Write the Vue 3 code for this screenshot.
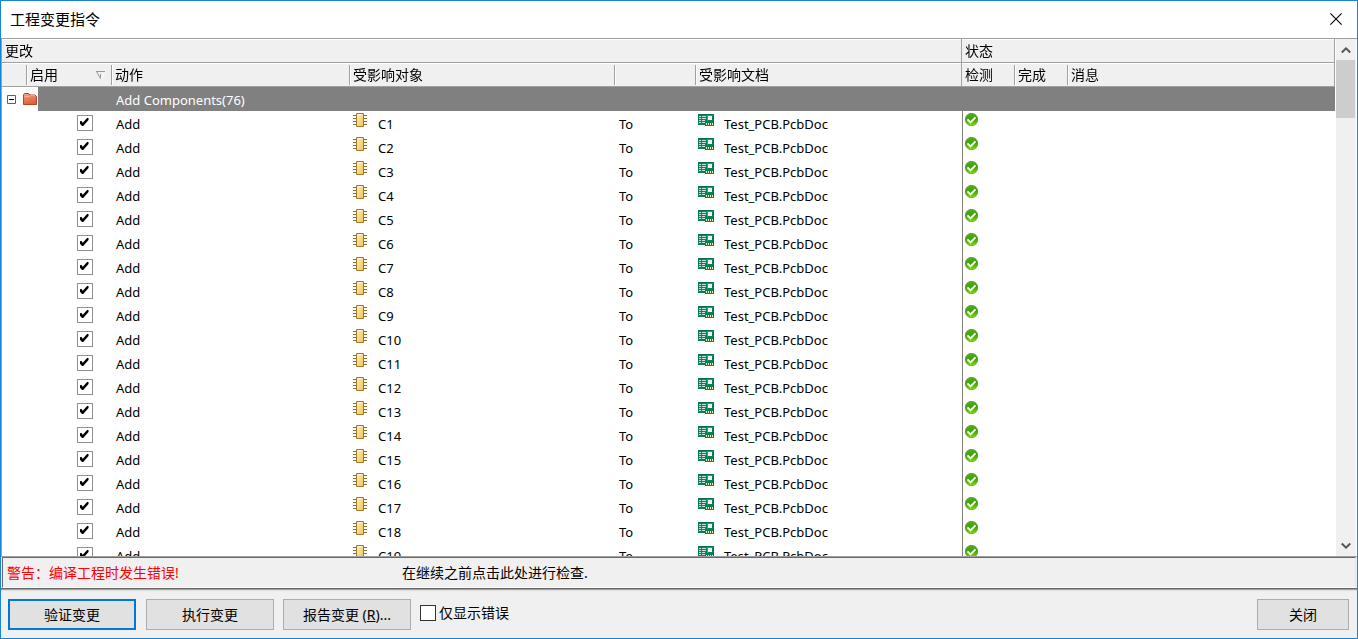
<script setup>
import { reactive, ref } from 'vue'

const rows = reactive(
  Array.from({ length: 19 }, (_, i) => ({ name: `C${i + 1}`, enabled: true }))
)
const onlyErrors = ref(false)
const list = ref(null)
const scroll = (dy) => list.value.scrollBy(0, dy)
const pins = [2, 5, 8, 11]
</script>

<template>
  <main class="window">
    <header class="title-bar">
      <h1>工程变更指令</h1>
      <button class="close" aria-label="关闭窗口">
        <svg width="12" height="12" viewBox="0 0 12 12"><path d="M.4.4l11.2 11.2M11.6.4L.4 11.6" stroke="#000" stroke-width="1.1" /></svg>
      </button>
    </header>

    <section class="grid-area">
      <div ref="list" class="list">
        <table>
          <colgroup>
            <col class="c-tree" /><col class="c-enable" /><col class="c-action" />
            <col class="c-object" /><col class="c-to" /><col class="c-doc" />
            <col class="c-check" /><col class="c-done" /><col />
          </colgroup>
          <thead>
            <tr class="bands">
              <th colspan="6" class="edge">更改</th>
              <th colspan="3" class="edge">状态</th>
            </tr>
            <tr class="heads">
              <th></th>
              <th class="sep">
                <div class="sort">启用
                  <svg width="9" height="8" viewBox="0 0 9 8" fill="none"><path d="M0 .5h9M.5 .5l4 7V3" stroke="#999" /><path d="M5.500 7.500l3-6" stroke="#fff" /></svg>
                </div>
              </th>
              <th class="sep">动作</th>
              <th class="sep">受影响对象</th>
              <th class="sep"></th>
              <th class="sep edge">受影响文档</th>
              <th>检测</th>
              <th class="sep">完成</th>
              <th class="sep edge">消息</th>
            </tr>
          </thead>
          <tbody>
            <tr class="group">
              <td colspan="2">
                <div class="tree">
                  <button class="toggle" aria-label="折叠"><svg width="9" height="9" viewBox="0 0 9 9"><path d="M.5.5h8v8h-8z" fill="#fff" stroke="#606060" /><path d="M2 4.500h5" stroke="#000" /></svg></button>
                  <svg width="14" height="12" viewBox="0 0 14 12">
                    <defs><linearGradient id="folder" x2="0.3" y2="1"><stop stop-color="#f6a184" /><stop offset="1" stop-color="#dc603c" /></linearGradient></defs>
                    <path d="M.5 11.500v-10l1-1h4l1.500 1.500h5l1 1 .5.500v8z" fill="url(#folder)" stroke="#b94324" />
                    <path d="M1.500 3.500h5l1-1h4.500" fill="none" stroke="#ffc0a4" stroke-width=".7" />
                  </svg>
                </div>
              </td>
              <td colspan="7">Add Components(76)</td>
            </tr>
            <tr v-for="row in rows" :key="row.name">
              <td></td>
              <td class="tick"><input v-model="row.enabled" type="checkbox" class="box" :aria-label="'启用 ' + row.name" /></td>
              <td>Add</td>
              <td class="object">
                <div class="item">
                  <svg width="14" height="14" viewBox="0 0 14 14">
                    <defs><linearGradient id="chip" x2="1" y2="1"><stop stop-color="#fff2ba" /><stop offset="1" stop-color="#f1bf55" /></linearGradient></defs>
                    <path v-for="y in pins" :key="y" :d="`M0 ${y + .5}h14`" stroke="#8a7433" />
                    <path d="M3.500.5h7v13h-7z" fill="url(#chip)" stroke="#9a7a2c" />
                    <path d="M4.500 1.500h5" stroke="#fff4cf" />
                  </svg>
                  {{ row.name }}
                </div>
              </td>
              <td>To</td>
              <td class="document">
                <div class="item doc">
                  <svg width="16" height="12" viewBox="0 0 16 12">
                    <path d="M0 0h16v12H7v-1H0z" fill="#08805a" />
                    <path d="M.5.5h15v10.500" fill="none" stroke="#06704e" />
                    <path d="M1 2.500h2M1 4.500h2M1 6.500h2M1 8.500h2M4 2.500h4M4 4.500h4M4 6.500h3M4 8.500h3" stroke="#c4e6d8" />
                    <path d="M10 2h4v4h-4z" fill="#edf5f5" />
                    <path d="M9 1.500h6M9.500 1v6" fill="none" stroke="#4ca98b" stroke-width=".6" />
                    <path d="M8.500 9v2M10.500 9v2M12.500 9v2M14.500 9v2" stroke="#f4eeb0" />
                  </svg>
                  Test_PCB.PcbDoc
                </div>
              </td>
              <td class="state">
                <svg width="13" height="13" viewBox="0 0 13 13" role="img" aria-label="通过">
                  <defs><linearGradient id="ok" x2="0" y2="1"><stop stop-color="#54ae28" /><stop offset=".45" stop-color="#3f9f08" /><stop offset="1" stop-color="#86e000" /></linearGradient></defs>
                  <circle cx="6.500" cy="6.500" r="6.200" fill="url(#ok)" stroke="#35891d" stroke-width=".6" />
                  <path d="M2.500 6.300l3 3 5-5" fill="none" stroke="#fff" stroke-width="1.900" />
                </svg>
              </td>
              <td></td>
              <td></td>
            </tr>
          </tbody>
        </table>
      </div>
      <div class="scrollbar">
        <button aria-label="向上滚动" @click="scroll(-24)"><svg width="10" height="8" viewBox="0 0 10 8"><path d="M.8 6.500L5 2.300l4.200 4.200" fill="none" stroke="#555" stroke-width="2" /></svg></button>
        <div class="track"><div class="thumb"></div></div>
        <button aria-label="向下滚动" @click="scroll(24)"><svg width="10" height="8" viewBox="0 0 10 8"><path d="M.8 1.500L5 5.700l4.200-4.200" fill="none" stroke="#555" stroke-width="2" /></svg></button>
      </div>
    </section>

    <section class="status">
      <p class="warning">警告：编译工程时发生错误!</p>
      <p>在继续之前点击此处进行检查.</p>
    </section>

    <footer class="actions">
      <button class="btn primary">验证变更</button>
      <button class="btn">执行变更</button>
      <button class="btn report">报告变更 (<u>R</u>)...</button>
      <label><input v-model="onlyErrors" type="checkbox" class="box dark" />仅显示错误</label>
      <button class="btn dismiss">关闭</button>
    </footer>
  </main>
</template>

<style>
body {
  margin: 0;
}
</style>

<style scoped>
.window {
  box-sizing: border-box;
  height: 100vh;
  display: flex;
  flex-direction: column;
  border: 1px solid #1883d7;
  background: #f0f0f0;
  color: #000;
  font: 14px/20px "Noto Sans", "Noto Sans CJK SC", sans-serif;
}
button {
  font: inherit;
  color: inherit;
  padding: 0;
  border: 0;
  background: none;
}
svg {
  display: block;
  flex: none;
}
.title-bar {
  flex: none;
  box-sizing: border-box;
  height: 38px;
  display: flex;
  align-items: center;
  justify-content: space-between;
  padding: 0 15px 2px 9px;
  border-bottom: 1px solid #a0a0a0;
  background: #fff;
}
h1 {
  margin: 0;
  font-size: 15px;
  font-weight: 400;
}
.grid-area {
  flex: 1;
  min-height: 0;
  display: flex;
  background: #fff;
  border-left: 1px solid #a0a0a0;
  border-bottom: 1px solid #a0a0a0;
}
.list {
  flex: 1;
  overflow: hidden;
}
table {
  width: 100%;
  table-layout: fixed;
  border-collapse: separate;
  border-spacing: 0;
}
.c-tree { width: 24px; }
.c-enable { width: 85px; }
.c-action { width: 238px; }
.c-object { width: 265px; }
.c-to { width: 81px; }
.c-doc { width: 267px; }
.c-check { width: 52px; }
.c-done { width: 53px; }
thead {
  position: sticky;
  top: 0;
  z-index: 1;
}
th,
td {
  box-sizing: border-box;
  height: 24px;
  text-align: left;
  font-weight: 400;
  line-height: 20px;
  white-space: nowrap;
}
th {
  padding: 0 0 0 3px;
  background-color: #f0f0f0;
  border-bottom: 1px solid #a0a0a0;
  box-shadow: inset 0 1px #fff;
}
.edge {
  border-right: 1px solid #a0a0a0;
}
.sep {
  padding-left: 4px;
  background-image: linear-gradient(90deg, #a0a0a0 1px, #fff 1px);
  background-size: 2px 20px;
  background-position: 0 2px;
  background-repeat: no-repeat;
}
.sort {
  display: flex;
  align-items: center;
  justify-content: space-between;
  padding-right: 6px;
}
td {
  font-size: 13px;
  padding: 2px 0 0 5px;
}
.group td {
  background: #808080;
  color: #fff;
}
.group td:first-child {
  padding: 0;
}
.tree {
  width: 36px;
  height: 24px;
  box-sizing: border-box;
  display: flex;
  align-items: center;
  gap: 7px;
  padding-left: 5px;
  background: #fff;
}
.tick {
  padding: 0 0 0 51px;
}
.box {
  appearance: none;
  display: grid;
  place-items: center;
  box-sizing: border-box;
  width: 16px;
  height: 16px;
  margin: 0;
  border: 1px solid #909090;
  background: #fff;
}
.box:checked::before {
  content: "";
  width: 9px;
  height: 8px;
  margin: 0 2px 2px 0;
  background: #000;
  clip-path: polygon(0 45%, 20% 35%, 36% 60%, 85% 0, 100% 0, 100% 25%, 42% 100%, 28% 100%, 0 65%);
}
.dark {
  border-color: #333;
}
.item {
  display: flex;
  align-items: flex-start;
  gap: 11px;
  height: 22px;
  line-height: 22px;
}
.doc {
  gap: 10px;
}
.doc svg {
  margin-top: 1px;
}
.object {
  padding-left: 4px;
}
.document {
  padding-left: 3px;
}
.state {
  padding: 2px 0 0 2px;
  vertical-align: top;
  border-left: 1px solid #808080;
}
.scrollbar {
  width: 19px;
  margin: 0 1px;
  border-right: 1px solid #f0f0f0;
  display: flex;
  flex-direction: column;
  background: #f0f0f0;
}
.scrollbar button {
  height: 21px;
  display: grid;
  place-items: center;
}
.track {
  flex: 1;
}
.thumb {
  height: 58px;
  background: #cdcdcd;
}
.status {
  flex: none;
  box-sizing: border-box;
  height: 31px;
  display: flex;
  align-items: center;
  margin: 0 1px;
  padding-left: 4px;
  border: 1px solid #696969;
  border-right-color: #e3e3e3;
  border-bottom-color: #fff;
}
.status p {
  flex: 1;
  margin: 0;
}
.status .warning {
  flex: 0 0 395px;
  color: #f00;
}
.actions {
  flex: none;
  display: flex;
  align-items: center;
  padding: 10px 8px 8px 7px;
  border-top: 1px solid #696969;
  box-shadow: inset 0 1px #a0a0a0, inset 0 2px #e0e0e0;
}
.btn {
  box-sizing: border-box;
  width: 128px;
  height: 31px;
  margin-right: 10px;
  border: 1px solid #adadad;
  background: #e1e1e1;
}
.primary {
  border: 2px solid #0078d7;
}
.report {
  margin: 0 9px 0 -1px;
}
.actions label {
  display: flex;
  align-items: center;
  gap: 3px;
  padding-bottom: 3px;
}
.dismiss {
  width: 92px;
  margin: 0 0 0 auto;
}
</style>
